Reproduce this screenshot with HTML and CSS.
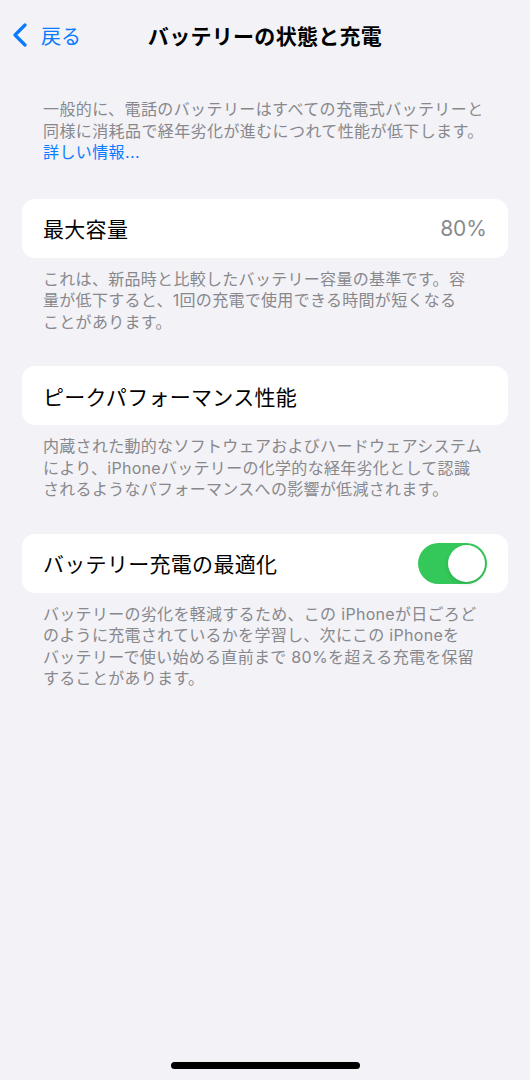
FILE: index.html
```html
<!DOCTYPE html>
<html lang="ja">
<head>
<meta charset="UTF-8">
<meta name="viewport" content="width=device-width, initial-scale=1.0">
<title>バッテリーの状態と充電</title>
<link rel="stylesheet" href="styles.css">
</head>
<body>
<div class="screen">
  <div class="nav">
    <a class="back" href="#">
      <svg class="chevron" width="16" height="24" viewBox="0 0 16 24">
        <polyline points="13,2 3,12 13,22" fill="none" stroke="#0a7aff" stroke-width="3.2" stroke-linecap="round" stroke-linejoin="round"/>
      </svg>
      <span>戻る</span>
    </a>
    <div class="title">バッテリーの状態と充電</div>
    <div></div>
  </div>

  <p class="intro">
    一般的に、電話のバッテリーはすべての充電式バッテリーと<br>
    同様に消耗品で経年劣化が進むにつれて性能が低下します。<br>
    <a class="more" href="#">詳しい情報...</a>
  </p>

  <div class="group first">
    <div class="card">
      <span class="label">最大容量</span>
      <span class="value">80%</span>
    </div>
    <p class="note">
      これは、新品時と比較したバッテリー容量の基準です。容<br>
      量が低下すると、1回の充電で使用できる時間が短くなる<br>
      ことがあります。
    </p>
  </div>

  <div class="group">
    <div class="card">
      <span class="label">ピークパフォーマンス性能</span>
    </div>
    <p class="note">
      内蔵された動的なソフトウェアおよびハードウェアシステム<br>
      により、iPhoneバッテリーの化学的な経年劣化として認識<br>
      されるようなパフォーマンスへの影響が低減されます。
    </p>
  </div>

  <div class="group">
    <div class="card">
      <span class="label">バッテリー充電の最適化</span>
      <span class="toggle on"><span class="knob"></span></span>
    </div>
    <p class="note">
      バッテリーの劣化を軽減するため、この iPhoneが日ごろど<br>
      のように充電されているかを学習し、次にこの iPhoneを<br>
      バッテリーで使い始める直前まで 80%を超える充電を保留<br>
      することがあります。
    </p>
  </div>

  <div class="home-bar"></div>
</div>
</body>
</html>
```

FILE: styles.css
```css
/* 基本 */
body {
  margin: 0;
  padding: 0;
  background: #f2f2f7;
  font-family: Inter, "Noto Sans CJK JP", sans-serif;
  color: #000;
}

.screen {
  min-height: 1080px;
  display: flex;
  flex-direction: column;
}

/* ナビゲーション */
.nav {
  height: 70px;
  display: grid;
  grid-template-columns: 1fr auto 1fr;
  align-items: center;
}

.back {
  display: flex;
  align-items: center;
  padding-left: 12px;
  color: #0a7aff;
  text-decoration: none;
  font-size: 20px;
}

.back span {
  margin-left: 13px;
}

.title {
  font-size: 21px;
  font-weight: bold;
  letter-spacing: 0.3px;
}

/* 説明文 */
.intro {
  margin: 29px 0 0;
  padding: 0 22px 0 43px;
  font-size: 16px;
  line-height: 21.5px;
  letter-spacing: 0.4px;
  color: #88888c;
  white-space: nowrap;
}

.more {
  color: #0a7aff;
  text-decoration: none;
}

.group {
  margin: 33px 22px 0;
}

.group.first {
  margin-top: 35px;
}

.card {
  height: 59px;
  background: #fff;
  border-radius: 13px;
  display: flex;
  align-items: center;
  justify-content: space-between;
  padding: 0 21px;
}

.label {
  font-size: 21px;
  letter-spacing: 0.3px;
}

.value {
  font-size: 21px;
  color: #8a8a8e;
}

.note {
  margin: 11px 0 0;
  padding: 0 0 0 21px;
  font-size: 16px;
  line-height: 21.5px;
  letter-spacing: 0.3px;
  color: #88888c;
  white-space: nowrap;
}

/* トグル */
.toggle {
  width: 69px;
  height: 41px;
  border-radius: 21px;
  background: #e9e9eb;
  display: flex;
  align-items: center;
  padding: 0 2px;
  box-sizing: border-box;
}

.toggle.on {
  background: #34c759;
  justify-content: flex-end;
}

.knob {
  width: 37px;
  height: 37px;
  border-radius: 50%;
  background: #fff;
  box-shadow: 0 2px 4px rgba(0,0,0,0.12);
}

.home-bar {
  margin-top: auto;
  margin-bottom: 11px;
  align-self: center;
  width: 189px;
  height: 7px;
  border-radius: 4px;
  background: #000;
}
```
